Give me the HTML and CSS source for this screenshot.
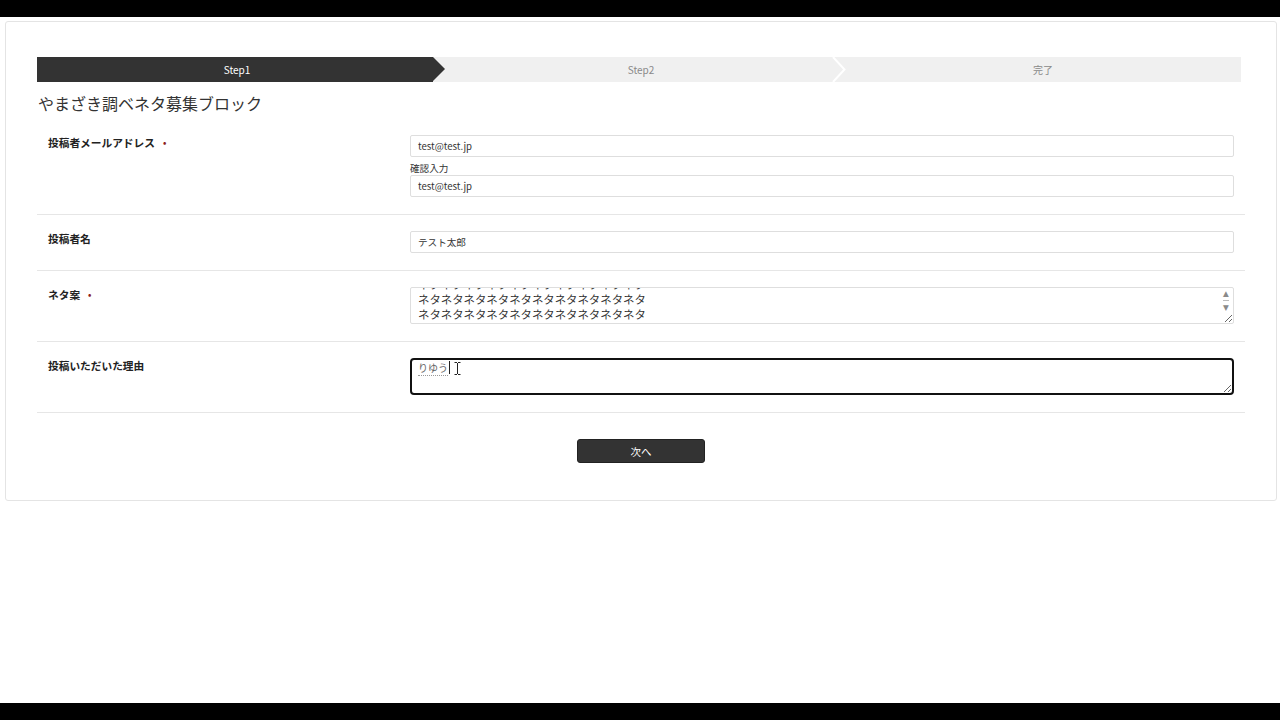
FILE: index.html
```html
<!DOCTYPE html>
<html lang="ja">
<head>
<meta charset="utf-8">
<title>やまざき調ベネタ募集ブロック</title>
<link rel="stylesheet" href="styles.css">
</head>
<body>
<div class="screen">
  <div class="card">
    <ol class="steps">
      <li class="step step-active">Step1</li>
      <li class="step step-mid">Step2
        <svg class="chev" width="14" height="25" viewBox="0 0 14 25"><polyline points="1,0 12.5,12.5 1,25" fill="none" stroke="#fff" stroke-width="2"/></svg>
      </li>
      <li class="step">完了</li>
    </ol>
    <h1 class="title">やまざき調ベネタ募集ブロック</h1>

    <div class="row">
      <div class="label">投稿者メールアドレス<span class="req">•</span></div>
      <div class="field">
        <div class="input">test@test.jp</div>
        <div class="sub">確認入力</div>
        <div class="input">test@test.jp</div>
      </div>
    </div>

    <div class="row">
      <div class="label">投稿者名</div>
      <div class="field">
        <div class="input">テスト太郎</div>
      </div>
    </div>

    <div class="row">
      <div class="label">ネタ案<span class="req">•</span></div>
      <div class="field">
        <div class="textarea">
          <div class="lines">
            <div>ネタネタネタネタネタネタネタネタネタネタ</div>
            <div>ネタネタネタネタネタネタネタネタネタネタ</div>
            <div>ネタネタネタネタネタネタネタネタネタネタ</div>
            <div>ネタネタネタネタネタネタネタネタネタネタ</div>
          </div>
          <div class="sbar">
            <span class="arr">▲</span>
            <span class="thumb"></span>
            <span class="arr">▼</span>
          </div>
        </div>
      </div>
    </div>

    <div class="row">
      <div class="label">投稿いただいた理由</div>
      <div class="field">
        <div class="textarea focus">
          <div class="typed"><span class="ime">りゆう</span><span class="caret"></span>
            <svg class="ibeam" width="7" height="13" viewBox="0 0 7 13"><path d="M0.5 0.5h2.5M4 0.5h2.5M3.5 1v11M0.5 12.5h2.5M4 12.5h2.5" stroke="#222" stroke-width="1" fill="none"/></svg>
          </div>
        </div>
      </div>
    </div>

    <div class="actions">
      <button class="btn">次へ</button>
    </div>
  </div>
</div>
</body>
</html>
```
FILE: styles.css
```css
* { box-sizing: border-box; }
html, body { margin: 0; padding: 0; }
body {
  background: #000;
  font-family: "Noto Sans CJK JP", "Noto Sans", sans-serif;
  color: #333;
}
.screen {
  margin-top: 17px;
  height: 686px;
  background: #fff;
  padding: 4px 3px 0 5px;
}
.card {
  border: 1px solid #e4e4e4;
  border-radius: 3px;
  padding: 35px 31px 37px 31px;
}
.steps {
  list-style: none;
  margin: 0 4px 0 0;
  padding: 0;
  display: grid;
  grid-template-columns: 396px 412px 1fr;
  height: 25px;
}
.step {
  position: relative;
  background: #f0f0f0;
  color: #8a8a8a;
  font-size: 10px;
  line-height: 25px;
  text-align: center;
}
.step-active {
  background: #333;
  color: #fff;
  z-index: 2;
  padding-left: 4px;
}
.step-active::after {
  content: "";
  position: absolute;
  left: 100%;
  top: 0;
  border-left: 12px solid #333;
  border-top: 12.5px solid transparent;
  border-bottom: 12.5px solid transparent;
}
.step-mid { padding-left: 4px; }
.chev {
  position: absolute;
  right: -1px;
  top: 0;
  z-index: 1;
}
.title {
  margin: 9px 0 4px 1px;
  font-size: 16px;
  line-height: 24px;
  font-weight: 400;
  color: #333;
}
.row {
  display: grid;
  grid-template-columns: 362px 1fr;
  padding: 16px 11px 17px;
  border-bottom: 1px solid #e6e6e6;
}
.label {
  font-size: 10.7px;
  font-weight: 700;
  line-height: 16px;
  color: #222;
}
.req {
  color: #8c1d1d;
  font-size: 9px;
  margin-left: 8px;
  vertical-align: 1px;
}
.input {
  height: 22px;
  border: 1px solid #dedede;
  border-radius: 2px;
  padding: 0 7px;
  font-size: 9.6px;
  line-height: 20px;
  color: #333;
}
.sub {
  font-size: 9.6px;
  line-height: 14px;
  margin-top: 4px;
  color: #333;
}
.textarea {
  height: 37px;
  border: 1px solid #dedede;
  border-radius: 2px;
  display: flex;
  overflow: hidden;
  resize: vertical;
}
.lines {
  flex: 1;
  display: flex;
  flex-direction: column;
  justify-content: flex-end;
  overflow: hidden;
  padding: 0 7px 1px;
  font-size: 11.4px;
  line-height: 15px;
  color: #333;
}
.sbar {
  width: 12px;
  display: flex;
  flex-direction: column;
  align-items: center;
  padding-top: 2px;
  margin-right: 1px;
  color: #8a8a8a;
}
.arr {
  font-size: 7.5px;
  line-height: 8px;
  font-family: "DejaVu Sans", sans-serif;
}
.thumb {
  width: 6px;
  height: 1px;
  background: #bbb;
  margin: 2px 0 3px;
}
.textarea.focus {
  height: 37px;
  border: 2px solid #111;
  border-radius: 4px;
}
.typed {
  position: relative;
  padding: 0 6px;
  font-size: 10px;
  line-height: 16px;
  color: #666;
}
.ime {
  border-bottom: 1px dotted #999;
}
.caret {
  display: inline-block;
  width: 1px;
  height: 13px;
  background: #222;
  vertical-align: -2px;
  margin-left: 1px;
}
.ibeam {
  position: absolute;
  left: 42px;
  top: 2px;
}
.actions {
  display: flex;
  justify-content: center;
  padding-top: 26px;
}
.btn {
  width: 128px;
  height: 24px;
  background: #333;
  border: 1px solid #222;
  border-radius: 3px;
  color: #fff;
  font-family: "Noto Sans CJK JP", sans-serif;
  font-size: 10.5px;
  padding: 0;
}
```
